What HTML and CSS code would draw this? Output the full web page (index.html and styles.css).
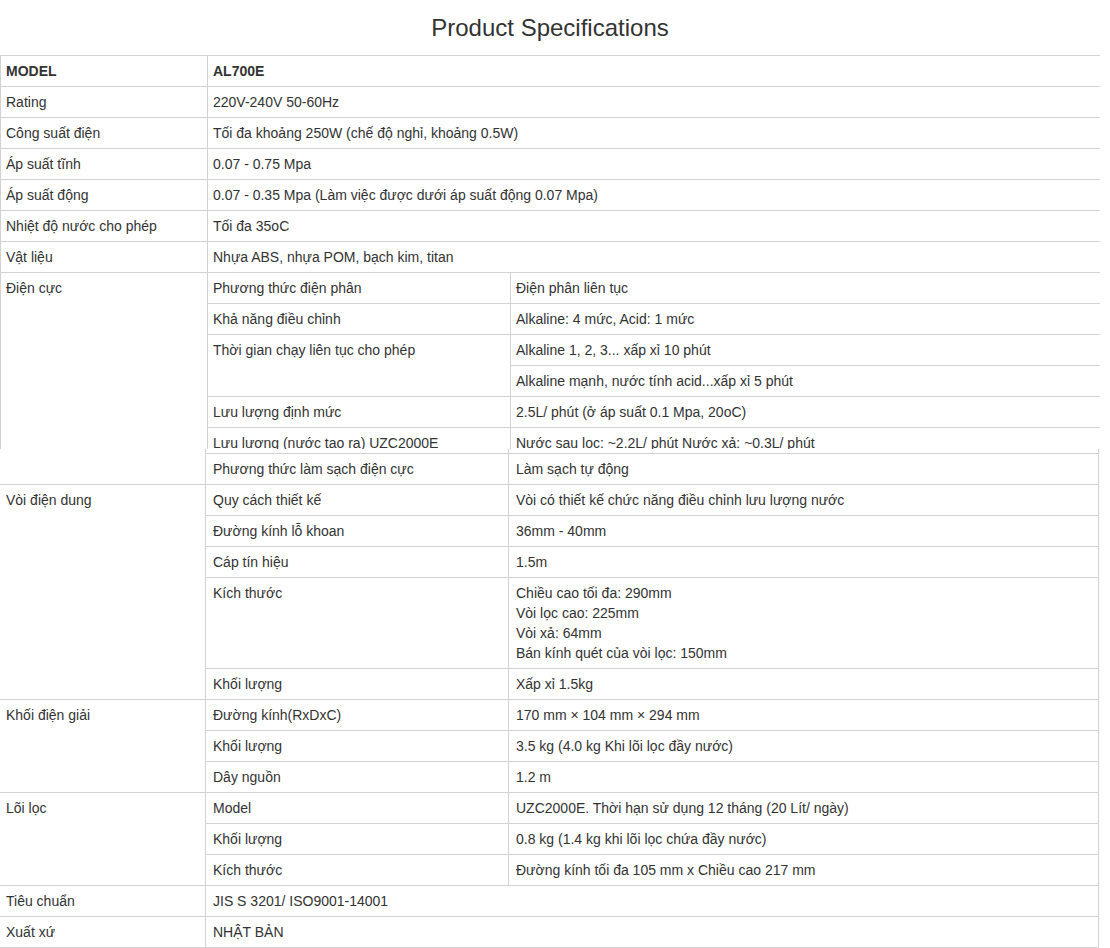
FILE: index.html
```html
<!DOCTYPE html>
<html lang="vi">
<head>
<meta charset="utf-8">
<title>Product Specifications</title>
<link rel="stylesheet" href="styles.css">
</head>
<body>
<div class="page">
  <h3 class="title">Product Specifications</h3>
  <div class="part part-top">
    <table class="spec">
      <colgroup><col class="c1"><col class="c2"><col class="c3"></colgroup>
      <tbody>
        <tr class="head"><td>MODEL</td><td colspan="2">AL700E</td></tr>
        <tr><td>Rating</td><td colspan="2">220V-240V 50-60Hz</td></tr>
        <tr><td>Công suất điện</td><td colspan="2">Tối đa khoảng 250W (chế độ nghỉ, khoảng 0.5W)</td></tr>
        <tr><td>Áp suất tĩnh</td><td colspan="2">0.07 - 0.75 Mpa</td></tr>
        <tr><td>Áp suất động</td><td colspan="2">0.07 - 0.35 Mpa (Làm việc được dưới áp suất động 0.07 Mpa)</td></tr>
        <tr><td>Nhiệt độ nước cho phép</td><td colspan="2">Tối đa 35oC</td></tr>
        <tr><td>Vật liệu</td><td colspan="2">Nhựa ABS, nhựa POM, bạch kim, titan</td></tr>
        <tr><td rowspan="6">Điện cực</td><td>Phương thức điện phân</td><td>Điện phân liên tục</td></tr>
        <tr><td>Khả năng điều chỉnh</td><td>Alkaline: 4 mức, Acid: 1 mức</td></tr>
        <tr><td rowspan="2">Thời gian chạy liên tục cho phép</td><td>Alkaline 1, 2, 3... xấp xỉ 10 phút</td></tr>
        <tr><td>Alkaline mạnh, nước tính acid...xấp xỉ 5 phút</td></tr>
        <tr><td>Lưu lượng định mức</td><td>2.5L/ phút (ở áp suất 0.1 Mpa, 20oC)</td></tr>
        <tr><td>Lưu lượng (nước tạo ra) UZC2000E</td><td>Nước sau lọc: ~2.2L/ phút Nước xả: ~0.3L/ phút</td></tr>
      </tbody>
    </table>
  </div>
  <div class="part part-bottom">
    <table class="spec spec-shift">
      <colgroup><col class="c1"><col class="c2"><col class="c3"></colgroup>
      <tbody>
        <tr class="stub"><td class="cont" rowspan="2"></td><td></td><td></td></tr>
        <tr><td>Phương thức làm sạch điện cực</td><td>Làm sạch tự động</td></tr>
        <tr><td rowspan="5">Vòi điện dung</td><td>Quy cách thiết kế</td><td>Vòi có thiết kế chức năng điều chỉnh lưu lượng nước</td></tr>
        <tr><td>Đường kính lỗ khoan</td><td>36mm - 40mm</td></tr>
        <tr><td>Cáp tín hiệu</td><td>1.5m</td></tr>
        <tr><td>Kích thước</td><td>Chiều cao tối đa: 290mm<br>Vòi lọc cao: 225mm<br>Vòi xả: 64mm<br>Bán kính quét của vòi lọc: 150mm</td></tr>
        <tr><td>Khối lượng</td><td>Xấp xỉ 1.5kg</td></tr>
        <tr><td rowspan="3">Khối điện giải</td><td>Đường kính(RxDxC)</td><td>170 mm × 104 mm × 294 mm</td></tr>
        <tr><td>Khối lượng</td><td>3.5 kg (4.0 kg Khi lõi lọc đầy nước)</td></tr>
        <tr><td>Dây nguồn</td><td>1.2 m</td></tr>
        <tr><td rowspan="3">Lõi lọc</td><td>Model</td><td>UZC2000E. Thời hạn sử dụng 12 tháng (20 Lít/ ngày)</td></tr>
        <tr><td>Khối lượng</td><td>0.8 kg (1.4 kg khi lõi lọc chứa đầy nước)</td></tr>
        <tr><td>Kích thước</td><td>Đường kính tối đa 105 mm x Chiều cao 217 mm</td></tr>
        <tr><td>Tiêu chuẩn</td><td colspan="2">JIS S 3201/ ISO9001-14001</td></tr>
        <tr><td>Xuất xứ</td><td colspan="2">NHẬT BẢN</td></tr>
      </tbody>
    </table>
  </div>
</div>
</body>
</html>
```

FILE: styles.css
```css
html, body {
  margin: 0;
  padding: 0;
  background: #fff;
}
body {
  font-family: "Liberation Sans", Arial, sans-serif;
  font-size: 14px;
  line-height: 20px;
  color: #333;
}
.page {
  width: 1100px;
}
.title {
  margin: 0;
  padding: 15px 0 14px;
  font-size: 24px;
  line-height: 26px;
  font-weight: 400;
  text-align: center;
  color: #333;
}
.part-top {
  height: 394px;
  overflow: hidden;
}
.part-bottom {
  overflow: hidden;
}
.spec {
  width: 1100px;
  border-collapse: collapse;
  table-layout: fixed;
}
.spec-shift {
  margin-left: -2px;
}
.c1 { width: 207px; }
.c2 { width: 303px; }
.c3 { width: 590px; }
.spec td {
  border: 1px solid #d2d2d2;
  padding: 5px;
  vertical-align: top;
  text-align: left;
}
.spec-shift td {
  padding: 5px 5px 5px 7px;
}
.spec .head td {
  font-weight: 700;
}
.spec .stub td {
  border-top: none;
  padding: 0;
  height: 4px;
  font-size: 0;
  line-height: 0;
}
.spec td.cont {
  border-top: none;
}
```
